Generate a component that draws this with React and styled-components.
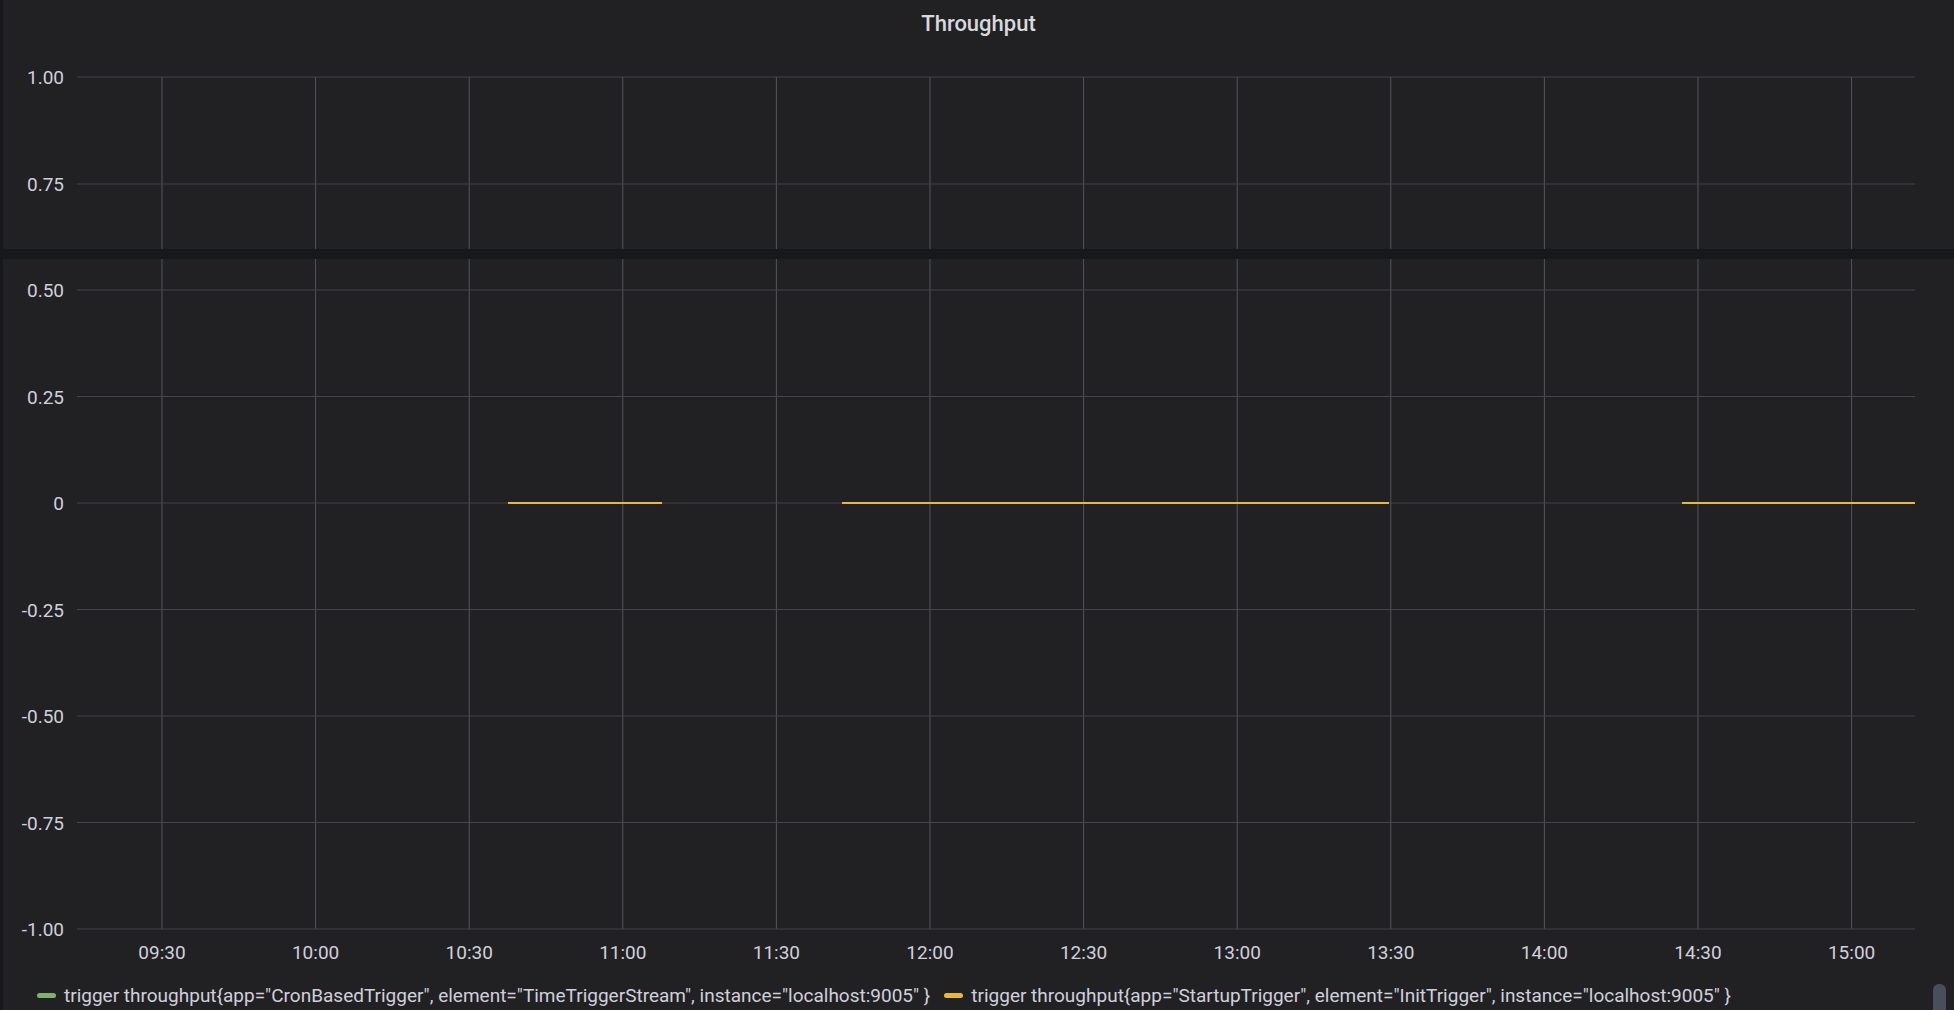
import React from 'react';
import styled, { createGlobalStyle } from 'styled-components';

const GlobalStyle = createGlobalStyle`
  html, body { margin: 0; padding: 0; background: #17181b; }
  body { font-family: Roboto, "Liberation Sans", sans-serif; }
`;

const PLOT_LEFT = 77;
const PLOT_RIGHT = 1915;
const STEP_Y = 106.5;
const X_TICKS = ['09:30', '10:00', '10:30', '11:00', '11:30', '12:00', '12:30', '13:00', '13:30', '14:00', '14:30', '15:00'];
const xAt = (i) => 162 + i * 153.6;
const GRID = '#444549';
const VGRID = '#535458';
const LABEL = '#d0d0dc';
const AXIS_FONT = 19;

const Page = styled.div`
  display: flex;
  flex-direction: column;
  width: 1954px;
  height: 1010px;
  overflow: hidden;
`;

const Panel = styled.div`
  position: relative;
  height: ${(p) => p.$height}px;
  flex: ${(p) => (p.$grow ? 1 : 'none')};
  margin-left: 3px;
  background: #212124;
  display: flex;
  flex-direction: column;
`;

const Divider = styled.div`
  height: 10px;
  background: #17181b;
`;

const Title = styled.div`
  position: absolute;
  top: 11px;
  left: 0;
  right: 0;
  text-align: center;
  color: #d8d9de;
  font-size: 22px;
  font-weight: 500;
`;

const Chart = styled.svg`
  display: block;
  flex: none;
`;

const Legend = styled.div`
  display: flex;
  align-items: center;
  gap: 8px;
  padding-left: 34px;
  height: 30px;
  margin-top: auto;
  margin-bottom: 0;
  color: ${LABEL};
  font-size: 19px;
`;

const LegendItem = styled.div`
  display: flex;
  align-items: center;
  gap: 8px;
  margin-right: 6px;
`;

const Swatch = styled.span`
  width: 19px;
  height: 5px;
  border-radius: 3px;
  background: ${(p) => p.$color};
`;

const Scrollbar = styled.div`
  position: absolute;
  right: 8px;
  bottom: 0;
  width: 13px;
  height: 26px;
  border-radius: 6px 6px 0 0;
  background: #4a4d5c;
`;

const W = 1951;

function YLabel({ y, text }) {
  return (
    <text x={PLOT_LEFT - 16} y={y + 7} textAnchor="end" fill={LABEL} fontSize={AXIS_FONT} fontFamily="Roboto, sans-serif">
      {text}
    </text>
  );
}

function TopChart() {
  const rows = [[77, '1.00'], [184, '0.75']];
  return (
    <Chart width={W} height={249}>
      {X_TICKS.map((t, i) => (
        <line key={t} x1={xAt(i) - 3} x2={xAt(i) - 3} y1={77} y2={249} stroke={VGRID} />
      ))}
      {rows.map(([y, t]) => (
        <g key={t}>
          <line x1={PLOT_LEFT - 3} x2={PLOT_RIGHT - 3} y1={y} y2={y} stroke={GRID} />
          <YLabel y={y} text={t} />
        </g>
      ))}
    </Chart>
  );
}

function BottomChart() {
  const labels = ['0.50', '0.25', '0', '-0.25', '-0.50', '-0.75', '-1.00'];
  const bottom = 31 + 6 * STEP_Y;
  const segments = [[508, 662], [842, 1389], [1682, 1915]];
  const zeroY = 31 + 2 * STEP_Y;
  return (
    <Chart width={W} height={714}>
      {X_TICKS.map((t, i) => (
        <g key={t}>
          <line x1={xAt(i) - 3} x2={xAt(i) - 3} y1={0} y2={bottom} stroke={VGRID} />
          <text x={xAt(i) - 3} y={bottom + 30} textAnchor="middle" fill={LABEL} fontSize={AXIS_FONT} fontFamily="Roboto, sans-serif">
            {t}
          </text>
        </g>
      ))}
      {labels.map((t, i) => {
        const y = 31 + i * STEP_Y;
        return (
          <g key={t}>
            <line x1={PLOT_LEFT - 3} x2={PLOT_RIGHT - 3} y1={y} y2={y} stroke={GRID} />
            <YLabel y={y} text={t} />
          </g>
        );
      })}
      {segments.map(([a, b]) => (
        <line key={a} x1={a - 3} x2={b - 3} y1={zeroY} y2={zeroY} stroke="#EAB839" strokeWidth="2" />
      ))}
    </Chart>
  );
}

export default function App() {
  return (
    <Page>
      <GlobalStyle />
      <Panel $height={249}>
        <Title>Throughput</Title>
        <TopChart />
      </Panel>
      <Divider />
      <Panel $grow>
        <BottomChart />
        <Legend>
          <LegendItem>
            <Swatch $color="#7EB26D" />
            trigger throughput{'{'}app="CronBasedTrigger", element="TimeTriggerStream", instance="localhost:9005" {'}'}
          </LegendItem>
          <LegendItem>
            <Swatch $color="#EAB839" />
            trigger throughput{'{'}app="StartupTrigger", element="InitTrigger", instance="localhost:9005" {'}'}
          </LegendItem>
        </Legend>
        <Scrollbar />
      </Panel>
    </Page>
  );
}
